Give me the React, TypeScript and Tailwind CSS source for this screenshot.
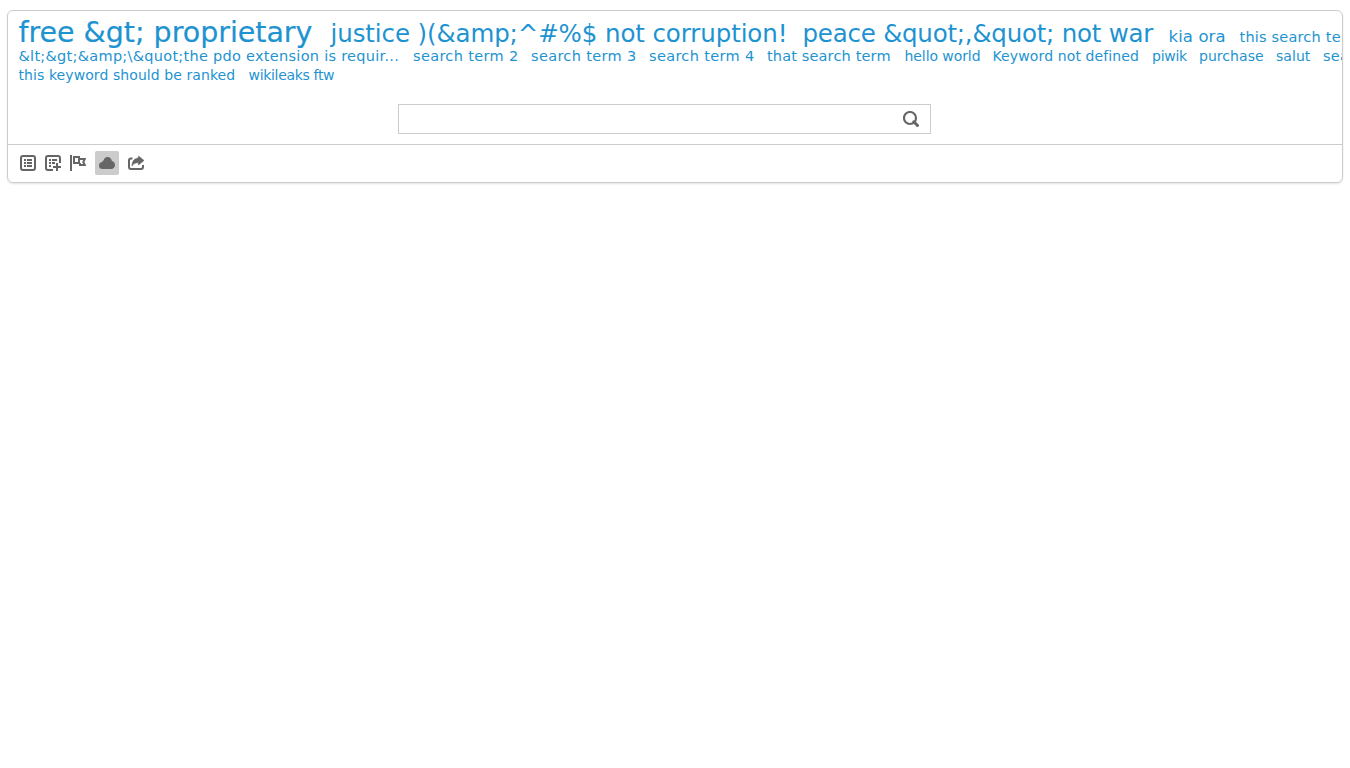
const rows = [
  {
    height: "h-[34px]",
    words: [
      { text: "free &gt; proprietary", cls: "w-[312px] text-[28.5px] tracking-[-0.03px] [-webkit-text-stroke:0.2px_#1e93d1]" },
      { text: "justice )(&amp;^#%$ not corruption!", cls: "w-[472px] text-[24.5px] tracking-[-0.1px]" },
      { text: "peace &quot;,&quot; not war", cls: "w-[366px] text-[24.5px] tracking-[-0.22px]" },
      { text: "kia ora", cls: "w-[71px] text-[16.5px] tracking-[0.1px]" },
      { text: "this search term", cls: "w-[124px] text-[14.5px] tracking-[0.2px]" },
    ],
  },
  {
    height: "h-[19px]",
    words: [
      { text: "&lt;&gt;&amp;\\&quot;the pdo extension is requir...", cls: "w-[394.5px] text-[14.5px] tracking-[0.28px]" },
      { text: "search term 2", cls: "w-[118px] text-[14.5px] tracking-[0.34px]" },
      { text: "search term 3", cls: "w-[118px] text-[14.5px] tracking-[0.34px]" },
      { text: "search term 4", cls: "w-[118px] text-[14.5px] tracking-[0.34px]" },
      { text: "that search term", cls: "w-[137.5px] text-[14.5px] tracking-[0.15px]" },
      { text: "hello world", cls: "w-[88px] text-[14px] tracking-[-0.08px]" },
      { text: "Keyword not defined", cls: "w-[159.5px] text-[14px] tracking-[0.12px]" },
      { text: "piwik", cls: "w-[47px] text-[14px] tracking-[-0.25px]" },
      { text: "purchase", cls: "w-[77px] text-[14px] tracking-[0.05px]" },
      { text: "salut", cls: "w-[47px] text-[14px] tracking-[0.05px]" },
      { text: "search term 5", cls: "w-[118px] text-[14.5px] tracking-[0.3px]" },
    ],
  },
  {
    height: "h-[19px]",
    words: [
      { text: "this keyword should be ranked", cls: "w-[230px] text-[14px] tracking-[0.08px]" },
      { text: "wikileaks ftw", cls: "w-[90px] text-[14px] tracking-[-0.32px]" },
    ],
  },
];

function TableIcon() {
  return (
    <svg className="size-4" viewBox="0 0 16 16" fill="none" stroke="#666" strokeWidth="2">
      <rect x="1" y="1" width="14" height="14" rx="2" />
      <path d="M4 5h2M7 5h5M4 8h2M7 8h5M4 11h2M7 11h5" />
    </svg>
  );
}

function TablePlusIcon() {
  return (
    <svg className="size-4" viewBox="0 0 16 16" fill="none" stroke="#666" strokeWidth="2">
      <path d="M15 8V3Q15 1 13 1H3Q1 1 1 3v10Q1 15 3 15H8" />
      <path d="M4 5h2M7 5h5M4 8h2M7 8h3M4 11h2M12 8v8M8 12h8" />
    </svg>
  );
}

function FlagIcon() {
  return (
    <svg className="size-4" viewBox="0 0 16 16" fill="none" stroke="#666">
      <path d="M1 0v16" strokeWidth="2" />
      <path d="M4 2h5v6H4z" strokeWidth="2" />
      <path d="M9 4h5.800l-1.500 3 1.500 3H10V8" strokeWidth="2" />
    </svg>
  );
}

function CloudIcon() {
  return (
    <svg className="size-4" viewBox="0 0 16 16" fill="#666">
      <path d="M3.500 14A3.500 3.500 0 0 1 0 10.500C0 8.500 1.500 7 3.400 6.800 3.700 6 4.100 5.500 4.700 5.200 5 3.300 6.500 2 8.500 2c2.300 0 4.200 1.700 4.400 4C14.800 6.400 16 8 16 10c0 2.300-1.600 4-3.800 4z" />
    </svg>
  );
}

function ShareIcon() {
  return (
    <svg className="size-4" viewBox="0 0 16 16" fill="none" stroke="#666" strokeWidth="2">
      <path d="M4.500 3.500H3Q1 3.500 1 5.500V12Q1 14 3 14h10q2 0 2-2v-2" />
      <path d="M10.500 1 16 5.500 10.500 10V7.800C7.500 7.600 5.500 8.500 4 11c0-4.800 2.500-7.800 6.500-8z" fill="#666" stroke="#666" strokeWidth="0.6" />
    </svg>
  );
}

const tools = [
  { name: "table", icon: <TableIcon />, cls: "mr-px" },
  { name: "all columns", icon: <TablePlusIcon />, cls: "mr-px" },
  { name: "goals", icon: <FlagIcon />, cls: "mr-[5px]" },
  { name: "cloud", icon: <CloudIcon />, cls: "mr-[5px] rounded-[2px] bg-[#ccc]" },
  { name: "export", icon: <ShareIcon />, cls: "" },
];

export default function App() {
  return (
    <div className="min-h-screen bg-white px-[7px] pt-[10px] font-['DejaVu_Sans',sans-serif]">
      <div className="h-[173px] w-[1336px] overflow-hidden rounded-[6px] border border-[#ccc] shadow-[0_1px_2px_rgba(0,0,0,0.12)]">
        <div className="flex h-[93px] flex-col pl-[10.500px] text-[#1e93d1]">
          {rows.map((row, i) => (
            <div key={i} className={`flex w-max items-baseline ${row.height}`}>
              <span className={i === 0 ? "h-[31px] w-0" : "h-[15.500px] w-0"} />
              {row.words.map((word) => (
                <span key={word.text} className={`shrink-0 whitespace-nowrap leading-none ${word.cls}`}>
                  {word.text}
                </span>
              ))}
            </div>
          ))}
        </div>
        <div className="ml-[390px] flex h-[30px] w-[533px] items-center justify-end border border-[#ccc] pr-[11px]">
          <svg className="size-4" viewBox="0 0 16 16" fill="none" stroke="#666">
            <circle cx="7" cy="7" r="6" strokeWidth="2.200" />
            <path d="m10.800 10.800 3.700 3.700" strokeWidth="3" strokeLinecap="round" />
          </svg>
        </div>
        <div className="mt-[10px] flex h-[39px] items-start border-t border-[#ccc] pt-[6px] pl-2">
          {tools.map((tool) => (
            <button key={tool.name} aria-label={tool.name} className={`flex size-6 items-center justify-center ${tool.cls}`}>
              {tool.icon}
            </button>
          ))}
        </div>
      </div>
    </div>
  );
}
